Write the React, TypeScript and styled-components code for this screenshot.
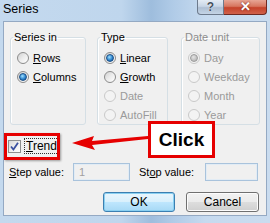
import React from 'react'
import styled, { createGlobalStyle } from 'styled-components'

const GlobalStyle = createGlobalStyle`
  html, body {
    margin: 0;
    padding: 0;
  }
  body {
    font-family: 'Liberation Sans', Arial, sans-serif;
    font-size: 11px;
    color: #000;
  }
`

const Window = styled.div`
  position: relative;
  width: 270px;
  height: 223px;
  overflow: hidden;
  background: linear-gradient(
    90deg,
    #c4d9ee 0%,
    #bfd6ed 45%,
    #9ebddd 56%,
    #b0cbe7 64%,
    #c6daef 76%,
    #cadcef 100%
  );
  display: flex;
  flex-direction: column;
`

const TitleBar = styled.div`
  height: 21px;
  display: flex;
  align-items: flex-start;
  justify-content: space-between;
  padding-left: 3px;
  padding-right: 3px;
`

const Title = styled.div`
  font-size: 12.5px;
  line-height: 19px;
  color: #000;
`

const Caption = styled.div`
  display: flex;
  height: 15px;
`

const CapButton = styled.div<{ $close?: boolean }>`
  width: ${(p) => (p.$close ? 42 : 25)}px;
  height: 14px;
  border: 1px solid ${(p) => (p.$close ? '#6e2a22' : '#6d7a8c')};
  border-top: none;
  border-left: ${(p) => (p.$close ? 'none' : undefined)};
  border-radius: ${(p) => (p.$close ? '0 0 4px 0' : '0 0 0 4px')};
  background: ${(p) =>
    p.$close
      ? 'linear-gradient(180deg, #e7a595 0%, #d7765f 45%, #c5422a 55%, #d0624b 100%)'
      : 'linear-gradient(180deg, #e3ebf4 0%, #c8d6e6 45%, #aebfd3 55%, #c4d4e6 100%)'};
  display: flex;
  align-items: center;
  justify-content: center;
  color: ${(p) => (p.$close ? '#fff' : '#44505e')};
  font-weight: bold;
  font-size: ${(p) => (p.$close ? 13 : 12)}px;
  line-height: 14px;
  text-shadow: ${(p) => (p.$close ? '0 0 2px #6b1b10' : '0 0 1px #fff')};
`

const Panel = styled.div`
  margin: 0 3px;
  height: 195px;
  box-sizing: border-box;
  border: 1px solid #94a9c3;
  background: #f0f0f0;
  padding-top: 9px;
`

const Groups = styled.div`
  display: flex;
  padding-left: 6px;
`

const Group = styled.fieldset<{ $w: number; $gap: number }>`
  width: ${(p) => p.$w}px;
  height: 94px;
  box-sizing: border-box;
  margin: 0 ${(p) => p.$gap}px 0 0;
  padding: 0 6px;
  border: 1px solid #d5dfe5;
  border-radius: 3px;
  box-shadow: inset 1px 1px 0 #fff;
`

const Legend = styled.legend<{ $disabled?: boolean }>`
  margin-left: -4px;
  padding: 0 1px;
  line-height: 13px;
  color: ${(p) => (p.$disabled ? '#8d8d8d' : '#000')};
`

const Options = styled.div`
  display: flex;
  flex-direction: column;
  padding-top: 4px;
`

const Option = styled.div<{ $disabled?: boolean }>`
  height: 19px;
  display: flex;
  align-items: center;
  gap: 4px;
  color: ${(p) => (p.$disabled ? '#9a9a9a' : '#000')};
  white-space: nowrap;
`

const Radio = styled.span<{ $checked?: boolean; $disabled?: boolean }>`
  width: 12px;
  height: 12px;
  box-sizing: border-box;
  border-radius: 50%;
  border: 1px solid ${(p) => (p.$disabled ? '#c9c9c9' : '#8b8b8b')};
  background: ${(p) =>
    p.$disabled
      ? '#f3f3f3'
      : 'linear-gradient(135deg, #d2d2d2 0%, #ececec 50%, #ffffff 100%)'};
  display: flex;
  align-items: center;
  justify-content: center;
  flex: none;

  &::after {
    content: '';
    display: ${(p) => (p.$checked ? 'block' : 'none')};
    width: 6px;
    height: 6px;
    border-radius: 50%;
    background: ${(p) =>
      p.$disabled
        ? 'radial-gradient(circle at 40% 35%, #e4e4e4 0%, #a9a9a9 100%)'
        : 'radial-gradient(circle at 40% 35%, #9fe0ff 0%, #2f86cf 55%, #0f4d8e 100%)'};
    border: 1px solid ${(p) => (p.$disabled ? '#9b9b9b' : '#1b4f86')};
  }
`

const Key = styled.span`
  text-decoration: underline;
`

const TrendRow = styled.div`
  display: flex;
  align-items: center;
  height: 16px;
  margin-top: 13px;
  padding-left: 4px;
  gap: 3px;
`

const Check = styled.span`
  width: 13px;
  height: 13px;
  box-sizing: border-box;
  border: 1px solid #8e8f8f;
  background: linear-gradient(135deg, #d8d8d8 0%, #f2f2f2 60%, #ffffff 100%);
  display: flex;
  align-items: center;
  justify-content: center;
`

const Focus = styled.span`
  padding: 0 1px;
  line-height: 14px;
  border: 1px dotted #333;
  font-size: 12px;
`

const FieldRow = styled.div`
  display: flex;
  align-items: center;
  margin-top: 9px;
  padding-left: 5px;
`

const FieldLabel = styled.span<{ $w: number; $pad?: number }>`
  width: ${(p) => p.$w}px;
  box-sizing: border-box;
  padding-left: ${(p) => p.$pad ?? 0}px;
  color: #000;
`

const Input = styled.div<{ $w: number }>`
  width: ${(p) => p.$w}px;
  height: 18px;
  box-sizing: border-box;
  border: 1px solid #a9c3dc;
  box-shadow: inset 0 0 0 1px #e2ecf5;
  background: #f0f0f0;
  color: #a0a0a0;
  padding-left: 5px;
  line-height: 16px;
`

const Buttons = styled.div`
  display: flex;
  justify-content: flex-end;
  gap: 11px;
  margin-top: 11px;
  padding-right: 7px;
`

const Button = styled.div<{ $focus?: boolean; $w: number }>`
  width: ${(p) => p.$w}px;
  height: 20px;
  box-sizing: border-box;
  border: 1px solid ${(p) => (p.$focus ? '#3c7fb1' : '#707070')};
  border-radius: 3px;
  background: ${(p) =>
    p.$focus
      ? 'linear-gradient(180deg, #eaf6fd 0%, #d9f0fc 48%, #bee6fd 52%, #a7d9f5 100%)'
      : 'linear-gradient(180deg, #f2f2f2 0%, #ebebeb 48%, #dddddd 52%, #cfcfcf 100%)'};
  box-shadow: inset 0 0 0 1px ${(p) => (p.$focus ? '#8ad0f1' : '#fcfcfc')};
  display: flex;
  align-items: center;
  justify-content: center;
  font-size: 12px;
`

const Highlight = styled.div`
  position: absolute;
  left: 4px;
  top: 133px;
  width: 56px;
  height: 27px;
  box-sizing: border-box;
  border: 3px solid #e60000;
  box-shadow: 1px 1px 2px rgba(0, 0, 0, 0.35);
`

const Arrow = styled.svg`
  position: absolute;
  left: 68px;
  top: 132px;
`

const Callout = styled.div`
  position: absolute;
  left: 148px;
  top: 121px;
  width: 67px;
  height: 37px;
  box-sizing: border-box;
  border: 3px solid #e60000;
  background: #fff;
  display: flex;
  align-items: center;
  justify-content: center;
  font-weight: bold;
  font-size: 19px;
  color: #000;
`

export default function App() {
  return (
    <Window>
      <GlobalStyle />
      <TitleBar>
        <Title>Series</Title>
        <Caption>
          <CapButton>?</CapButton>
          <CapButton $close>✕</CapButton>
        </Caption>
      </TitleBar>
      <Panel>
        <Groups>
          <Group $w={76} $gap={11}>
            <Legend>Series in</Legend>
            <Options>
              <Option>
                <Radio />
                <span>
                  <Key>R</Key>ows
                </span>
              </Option>
              <Option>
                <Radio $checked />
                <span>
                  <Key>C</Key>olumns
                </span>
              </Option>
            </Options>
          </Group>
          <Group $w={71} $gap={13}>
            <Legend>Type</Legend>
            <Options>
              <Option>
                <Radio $checked />
                <span>
                  <Key>L</Key>inear
                </span>
              </Option>
              <Option>
                <Radio />
                <span>
                  <Key>G</Key>rowth
                </span>
              </Option>
              <Option $disabled>
                <Radio $disabled />
                <span>Date</span>
              </Option>
              <Option $disabled>
                <Radio $disabled />
                <span>AutoFill</span>
              </Option>
            </Options>
          </Group>
          <Group $w={79} $gap={0}>
            <Legend $disabled>Date unit</Legend>
            <Options>
              <Option $disabled>
                <Radio $disabled $checked />
                <span>Day</span>
              </Option>
              <Option $disabled>
                <Radio $disabled />
                <span>Weekday</span>
              </Option>
              <Option $disabled>
                <Radio $disabled />
                <span>Month</span>
              </Option>
              <Option $disabled>
                <Radio $disabled />
                <span>Year</span>
              </Option>
            </Options>
          </Group>
        </Groups>
        <TrendRow>
          <Check>
            <svg width="9" height="9" viewBox="0 0 9 9">
              <path
                d="M1 4.5 L3.4 7.5 L8 0.8"
                fill="none"
                stroke="#3a50a0"
                strokeWidth="1.8"
              />
            </svg>
          </Check>
          <Focus>
            <Key>T</Key>rend
          </Focus>
        </TrendRow>
        <FieldRow>
          <FieldLabel $w={64}>
            <Key>S</Key>tep value:
          </FieldLabel>
          <Input $w={57}>1</Input>
          <FieldLabel $w={75} $pad={9}>
            St<Key>o</Key>p value:
          </FieldLabel>
          <Input $w={53} />
        </FieldRow>
        <Buttons>
          <Button $focus $w={72}>
            OK
          </Button>
          <Button $w={73}>Cancel</Button>
        </Buttons>
      </Panel>
      <Highlight />
      <Arrow width="82" height="20" viewBox="0 0 82 20">
        <polygon points="4,11 26,4 24,9 80,4 80,7 24,13 27,18" fill="#e60000" />
      </Arrow>
      <Callout>Click</Callout>
    </Window>
  )
}
